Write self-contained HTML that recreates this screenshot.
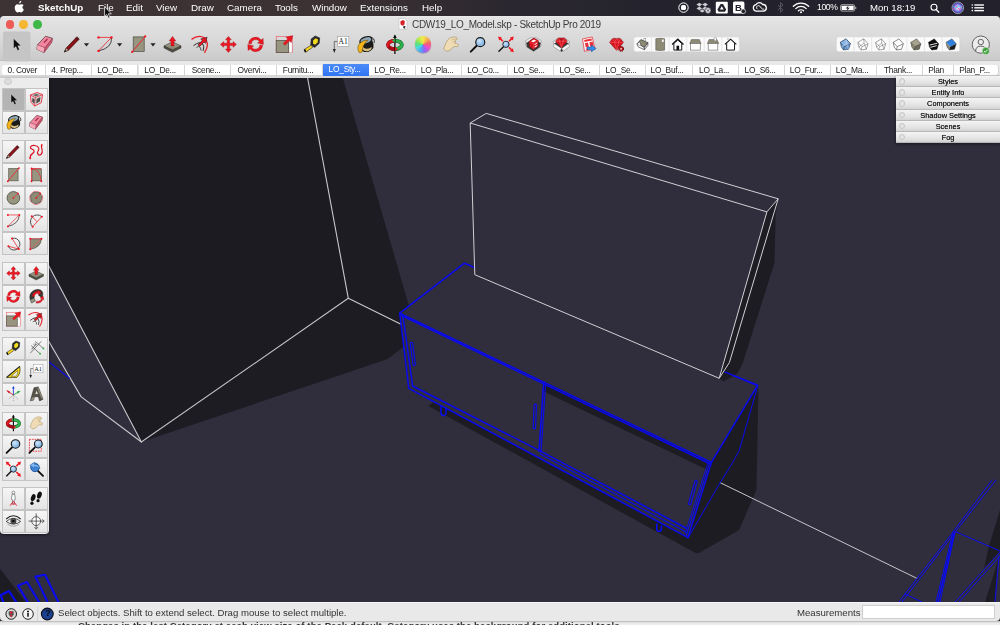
<!DOCTYPE html>
<html lang="en">
<head>
<meta charset="utf-8">
<title>CDW19_LO_Model.skp - SketchUp Pro 2019</title>
<style>
*{box-sizing:border-box;margin:0;padding:0}
html,body{width:1000px;height:625px;overflow:hidden;background:#302e3c;font-family:"Liberation Sans",sans-serif;}
body{position:relative}
.abs{position:absolute}
#menubar{position:absolute;left:0;top:0;width:1000px;height:16px;background:linear-gradient(90deg,#3e3334 0%,#3b3133 35%,#2c2830 50%,#24232d 65%,#23222c 100%);color:#fff;font-size:9.8px;line-height:15px;white-space:nowrap}
#menubar span{position:absolute;top:0}
#menubar .b{font-weight:bold}
#win{position:absolute;left:0;top:16px;width:1000px;height:45px;background:linear-gradient(#ececec 0,#e4e4e4 1.5px,#dadada 22px,#cbcbcb 43.500px,#bdbdbd 44.200px,#bdbdbd 100%);border-radius:4px 4px 0 0}
#title{position:absolute;left:412px;top:1.600px;font-size:10px;letter-spacing:-.31px;line-height:14px;color:#3c3c3c;white-space:nowrap}
.tl{position:absolute;top:4px;width:8.6px;height:8.6px;border-radius:50%}
#tabs{position:absolute;left:0;top:61px;width:1000px;height:16.500px;background:linear-gradient(#e9e9e9 0,#e6e6e6 14px,#d6d6d6 14.500px,#d9d9d9 100%)}
.tab{position:absolute;top:3.500px;height:10.700px;background:#fff;font-size:8.400px;letter-spacing:-.25px;line-height:11.300px;text-align:center;color:#1c1c1c;white-space:nowrap;border-right:1px solid #d4d4d4;padding-right:3px;overflow:hidden}
.tab.sel{background:linear-gradient(#4c8bf8,#2f74f2);color:#fff;top:3px;height:11.700px;border-right:0}
.tab:first-child{border-radius:3px 0 0 3px}.tab:last-child{border-radius:0 3px 3px 0}
#view{position:absolute;left:0;top:77.500px;width:1000px;height:524.500px;background:#302e3c;overflow:hidden}
#status{position:absolute;left:0;top:602px;width:1000px;height:18.600px;background:#e9e9e9;border-top:1px solid #f6f6f6;border-radius:0 0 4px 4px;font-size:9.6px;line-height:19px;color:#333;white-space:nowrap}
#under{position:absolute;left:0;top:620.600px;width:1000px;height:4.400px;background:linear-gradient(#a8a8a8 0,#cfcfcf .8px,#e9e9e9 1.800px,#f0f0f0 100%);overflow:hidden}

#tray{position:absolute;left:896px;top:76.300px;width:104px;height:67px;background:#d8d8d8;box-shadow:0 1px 3px rgba(0,0,0,.5)}
.trow{position:relative;height:11.1px;background:linear-gradient(#f4f4f4,#e2e2e2 70%,#d2d2d2);border-bottom:1px solid #b8b8b8;font-size:7.4px;line-height:11.600px;text-align:center;color:#1a1a1a;white-space:nowrap;text-shadow:0 0 .3px #333}
.trow i{position:absolute;left:2.5px;top:2px;width:6.5px;height:6.5px;border-radius:50%;background:#e4e4e4;border:.5px solid #c6c6c6}

#pal{position:absolute;left:0;top:77.500px;width:49.300px;height:456.700px;background:#ececec;border-radius:0 0 4px 4px;box-shadow:0 1px 3px rgba(0,0,0,.5)}
#pal .pc{position:absolute;left:4.300px;top:.300px;width:7.400px;height:7.400px;border-radius:50%;background:#dcdcdc;border:.5px solid #cbcbcb}
.cell{position:absolute;width:22.800px;height:23px;background:linear-gradient(#f6f6f6,#e4e4e4);border:.5px solid #c4c4c4}
.cell.sel{background:#b4b4b4}
#menubar span,#title,.tab u,.trow u,#status span,#under span{will-change:transform}
.tab u,.trow u{display:block;text-decoration:none}
</style>
</head>
<body>
















<!--ICONS--><svg width="0" height="0" style="position:absolute">
<defs>
<radialGradient id="lens" cx=".4" cy=".35" r=".7"><stop offset="0" stop-color="#cfe6fa"/><stop offset="1" stop-color="#6fa6dc"/></radialGradient>
<linearGradient id="slab" x1="0" y1="0" x2="0" y2="1"><stop offset="0" stop-color="#a9a793"/><stop offset="1" stop-color="#7d7b68"/></linearGradient>
<symbol id="i-select" viewBox="-10 -10 20 20" overflow="visible"><path d="M-2.700,-5.800V4.200L-0.400,2.200L1.300,6L3.100,5.200L1.400,1.400H4.600Z" fill="#0c0c0c" stroke="#fff" stroke-width=".5" stroke-opacity=".5"/></symbol>
<symbol id="i-eraser" viewBox="-10 -10 20 20" overflow="visible"><path d="M0.650,-8.200L7.500,-6.100L6.900,-2.200L-0.900,8.200L-8.100,4.800L-7.400,0.400Z" fill="#f2879f" stroke="#4a3036" stroke-width=".7" stroke-linejoin="round"/><path d="M-7.400,0.400L0,3.250L-0.900,8.200L-8.100,4.800Z" fill="#f7a9ba"/><path d="M7.500,-6.100L0,3.250L-0.900,8.200L6.900,-2.200Z" fill="#c9536c"/><path d="M-7.400,0.400L0,3.250L7.500,-6.100M0,3.250L-0.900,8.200" stroke="#6a2c3c" stroke-width=".5" fill="none"/><path d="M-1,-1.600L2.600,-5.400" stroke="#a8324f" stroke-width="1.500"/></symbol>
<symbol id="i-pencil" viewBox="-10 -10 20 20" overflow="visible"><path d="M-8.200,7.600L-6.300,3.600L4.400,-7.600L6.800,-5.400L-4,5.800Z" fill="#8c1016" stroke="#2a0a0c" stroke-width=".6" stroke-linejoin="round"/><path d="M-8.200,7.600L-6.300,3.600L-4,5.800Z" fill="#b8b0a0" stroke="#2a0a0c" stroke-width=".4"/><path d="M-8.200,7.600L-7.300,5.600L-6.100,6.700Z" fill="#111"/><path d="M3.200,-6.400L5.700,-4.200" stroke="#222" stroke-width=".9"/></symbol>
<symbol id="i-arc" viewBox="-10 -10 20 20" overflow="visible"><path d="M6.500,-7Q7.500,3.500 -6.500,6.500" stroke="#222" stroke-width=".8" fill="none"/><path d="M-6.500,-7H6.500L-6.500,6.500" stroke="#e8202a" stroke-width=".8" fill="none"/><circle cx="-6.500" cy="-7" r="1.200" fill="#f0141e"/><circle cx="6.500" cy="-7" r="1.200" fill="#f0141e"/><circle cx="-6.500" cy="6.500" r="1.200" fill="#f0141e"/></symbol>
<symbol id="i-rect" viewBox="-10 -10 20 20" overflow="visible"><rect x="-5.500" y="-7.500" width="11" height="14.500" fill="#97957f" stroke="#4c4b40" stroke-width=".7"/><path d="M-6.500,7.500L6.500,-8" stroke="#ee2030" stroke-width="1"/><circle cx="-6.500" cy="7.500" r="1.100" fill="#f0141e"/><circle cx="6.500" cy="-8" r="1.100" fill="#f0141e"/></symbol>
<symbol id="i-pushpull" viewBox="-10 -10 20 20" overflow="visible"><path d="M-8.500,1.500L0,-2.600L8.500,1.500L0,5.800Z" fill="url(#slab)" stroke="#3c3b32" stroke-width=".6"/><path d="M-8.500,1.500V3.500L0,7.900L8.500,3.500V1.500L0,5.800Z" fill="#4f4e43" stroke="#2c2b25" stroke-width=".5"/><path d="M-1.500,1.500V-3.500H-3.300L0,-8L3.300,-3.500H1.500V1.500Z" fill="#ee1620" stroke="#8a0a10" stroke-width=".4"/></symbol>
<symbol id="i-offset" viewBox="-10 -10 20 20" overflow="visible"><path d="M-9,-5Q-2,-10 4,-6.500Q10,-1.500 4,8.500" stroke="#e8202a" stroke-width="1.300" fill="none"/><path d="M-7,1.300Q-1,-3.500 2.200,-0.600Q4.200,2 2.600,6.500" stroke="#2a2a2a" stroke-width="1" fill="none"/><path d="M-4,3Q0,0.200 0.600,6.200" stroke="#2a2a2a" stroke-width=".8" fill="none"/><path d="M-2.600,0.400L1.800,-3.800L0.200,-5.400L6.600,-7.200L5,-1L3.500,-2.400L-0.800,2Z" fill="#ee1620" stroke="#111" stroke-width=".5" stroke-linejoin="round"/></symbol>
<symbol id="i-move" viewBox="-10 -10 20 20" overflow="visible"><path d="M0,-8L2.900,-4.700H1.200V-1.200H4.700V-2.900L8,0L4.700,2.900V1.200H1.200V4.700H2.900L0,8L-2.900,4.700H-1.200V1.200H-4.700V2.900L-8,0L-4.700,-2.900V-1.200H-1.200V-4.700H-2.900Z" fill="#ee1620" stroke="#a00c14" stroke-width=".4"/></symbol>
<symbol id="i-rotate" viewBox="-10 -10 20 20" overflow="visible"><path d="M-7,-1A7,7 0 0 1 5.500,-4.500L7.500,-6L7.800,0L2,-1.500L3.800,-3A4.500,4.500 0 0 0 -4.300,-0.500Z" fill="#ee1620" stroke="#a00c14" stroke-width=".4"/><path d="M7,1A7,7 0 0 1 -5.500,4.500L-7.500,6L-7.800,0L-2,1.500L-3.800,3A4.500,4.500 0 0 0 4.300,0.500Z" fill="#ee1620" stroke="#a00c14" stroke-width=".4"/></symbol>
<symbol id="i-scale" viewBox="-10 -10 20 20" overflow="visible"><rect x="-8" y="-8" width="16" height="16" fill="none" stroke="#ee5060" stroke-width=".6"/><rect x="5" y="-2" width="2.500" height="10" fill="#fff"/><rect x="-8" y="-4" width="12.500" height="12" fill="#97957f" stroke="#4c4b40" stroke-width=".7"/><path d="M-1,-1L3.500,-5.500L1.800,-7.200L8.500,-8.800L7,-2L5.300,-3.700L0.800,0.800Z" fill="#ee1620" stroke="#a00c14" stroke-width=".4"/></symbol>
<symbol id="i-tape" viewBox="-10 -10 20 20" overflow="visible"><path d="M-1,-5.500L3,-8.500L7.500,-6.500L7,-1L2.500,3L-1.500,0.500Z" fill="#2a2a2a" stroke="#111" stroke-width=".5"/><path d="M1,-4.200L3.500,-6.200L5.800,-5L5.400,-1.800L2.800,0.300L0.800,-1Z" fill="#f3dc1c"/><path d="M-7.800,5L-1.200,0.800L0.600,2.800L-6.500,7.800Z" fill="#f2d21a" stroke="#222" stroke-width=".6"/><path d="M-7.800,5L-6.500,7.800" stroke="#111" stroke-width="1.600"/></symbol>
<symbol id="i-text" viewBox="-10 -10 20 20" overflow="visible"><rect x="-3.500" y="-8" width="11.500" height="10" fill="#fff" stroke="#9a9a9a" stroke-width=".6"/><text x="2.300" y="-0.300" font-family="Liberation Serif,serif" font-size="7.500" text-anchor="middle" fill="#111">A1</text><path d="M-3.500,-3H-6.500V5" stroke="#444" stroke-width=".7" fill="none"/><path d="M-8,4.500H-5L-6.500,8.500Z" fill="#222"/></symbol>
<symbol id="i-paint" viewBox="-10 -10 20 20" overflow="visible"><path d="M-5.800,-2.500Q-6,5.500 -1.500,7.500Q4,8.500 7.800,3.500Q8.500,-1 6,-5.500Z" fill="#1a1a1a"/><path d="M-3,2Q0,6.500 6,2.500Q6.500,5 3,6.500Q-1,7.500 -3.500,4.500Z" fill="#d6bd80"/><ellipse cx="0.300" cy="-4" rx="6.200" ry="3.500" transform="rotate(-18 0.300 -4)" fill="#8fa6b4" stroke="#1a1a1a" stroke-width="1.300"/><path d="M-6.500,8Q-9.500,2.500 -5.500,-1.500Q-2,-4.500 2.500,-4.200Q-0.500,-2 -2,1Q-3.500,4.500 -3.500,7.600Q-5,8.600 -6.500,8Z" fill="#f2b418" stroke="#5a3e06" stroke-width=".5"/><path d="M5,-7Q9.500,-6.500 8.500,-1.500" stroke="#1a1a1a" stroke-width=".9" fill="none"/></symbol>
<symbol id="i-orbit" viewBox="-10 -10 20 20" overflow="visible"><path d="M0,-3.800A7,4.200 0 0 0 0,4.600" fill="none" stroke="#6a060c" stroke-width="3.800"/><path d="M0,-3.800A7,4.200 0 0 1 0,4.600" fill="none" stroke="#0f5a22" stroke-width="3.800"/><path d="M0,-3.800A7,4.200 0 0 0 0,4.600" fill="none" stroke="#e01822" stroke-width="2.800"/><path d="M0,-3.800A7,4.200 0 0 1 0,4.600" fill="none" stroke="#2eb24e" stroke-width="2.800"/><path d="M-6.500,2.200A7,4.200 0 0 0 0,4.600" fill="none" stroke="#a80c16" stroke-width="2.800"/><path d="M0,-9V9.500" stroke="#0c0c0c" stroke-width="1.300"/><path d="M-1.800,-6.500L0,-9.800L1.800,-6.500Z" fill="#0c0c0c"/><path d="M0,2.600L3.200,4.600L0,6.800Z" fill="#e01822"/><path d="M0,-5.800L-3,-3.800L0,-1.800Z" fill="#2eb24e"/></symbol>
<symbol id="i-pan" viewBox="-10 -10 20 20" overflow="visible"><path d="M-7.200,4.500L-4.800,-1.500Q-3.500,-5 -0.500,-6.600Q2.500,-8 5.500,-7.200Q7.200,-6.300 6,-5L4,-3.800Q5.200,-3.500 4.600,-2.200L3.600,-1.200Q6,-1.200 7.600,0.400Q7.800,2 6.200,2.400Q4,1.600 2.400,2.600Q0.500,4 -0.500,5.800L-4.200,6.800Z" fill="#f0dcb4" stroke="#a89060" stroke-width=".6" stroke-linejoin="round"/><path d="M0.500,-4.200Q2.500,-5.800 5.800,-5.200M1.500,-2.300Q3,-3.200 4.400,-2.800" fill="none" stroke="#b49a6c" stroke-width=".5"/></symbol>
<symbol id="i-zoom" viewBox="-10 -10 20 20" overflow="visible"><path d="M-8,8L-1.500,1.500" stroke="#111" stroke-width="2.200" stroke-linecap="round"/><circle cx="2.500" cy="-2.500" r="5" fill="url(#lens)" stroke="#1a1a1a" stroke-width="1.300"/></symbol>
<symbol id="i-zoomext" viewBox="-10 -10 20 20" overflow="visible"><path d="M-8,8L-2,2" stroke="#111" stroke-width="1.600" stroke-linecap="round"/><circle cx="0" cy="0" r="3.600" fill="url(#lens)" stroke="#1a1a1a" stroke-width="1"/><path d="M-9,-9L-4.500,-7.800L-7.800,-4.500ZM9,-9L4.500,-7.800L7.800,-4.500ZM9,9L4.500,7.800L7.800,4.500Z" fill="#ee1620"/><path d="M-6.500,-6.500L-3.500,-3.500M6.500,-6.500L3.500,-3.500M6.500,6.500L3.500,3.500" stroke="#ee1620" stroke-width="1.800"/></symbol>
<symbol id="i-zoomwin" viewBox="-10 -10 20 20" overflow="visible"><rect x="-8" y="-8" width="14" height="14" fill="none" stroke="#ee1620" stroke-width=".9" stroke-dasharray="2 1"/><path d="M-8,8L-1.500,1.500" stroke="#111" stroke-width="2.200" stroke-linecap="round"/><circle cx="2.500" cy="-2.500" r="4.600" fill="url(#lens)" stroke="#1a1a1a" stroke-width="1.200"/></symbol>
<symbol id="i-prev" viewBox="-10 -10 20 20" overflow="visible"><path d="M8,8L2,2" stroke="#111" stroke-width="2.200" stroke-linecap="round"/><circle cx="-1.500" cy="-2" r="5" fill="#3f86d8" stroke="#1d4f8e" stroke-width="1"/><path d="M-7.500,-4.500L-2,-8V-5.800Q3.500,-5.500 4.500,0Q2,-3 -2,-2.800V-1Z" fill="#7db8f2" stroke="#1d4f8e" stroke-width=".5"/></symbol>
<symbol id="i-wh" viewBox="-10 -10 20 20" overflow="visible"><path d="M-8,-1.500L0,-6.500L8,-1.500L7,3L0.300,7.500L-7,3Z" fill="#3a3a36" stroke="#1c1c1c" stroke-width=".5"/><path d="M-8,-1.500L-9,-3.800L-2.500,-7.800L0,-6.500ZM8,-1.500L9,-3.800L2.500,-7.800L0,-6.500Z" fill="#ececec" stroke="#555" stroke-width=".4"/><path d="M-7,3L-8.500,1.200L-8,-1.500ZM7,3L8.500,1.200L8,-1.500Z" fill="#ececec" stroke="#555" stroke-width=".4"/><path d="M-4.800,-3.200L0.500,-7.200L5.500,-4.200L5,2.300L0,5.500L-4.600,2.300Z" fill="#d8141e" stroke="#7a0a10" stroke-width=".5"/><path d="M-4.800,-3.200L0.200,-0.800L5.500,-4.200M0.200,-0.800L0,5.500" stroke="#f25a62" stroke-width=".5" fill="none"/><path d="M-2.800,-3.600L0.600,-5.400L3.200,-4L-0.200,-2.300ZM1.300,-0.200L4.300,-2V-0.900L1.300,0.900ZM1.300,2.400L4.300,0.600V1.800L1.300,3.600Z" fill="#fff"/></symbol>
<symbol id="i-extwh" viewBox="-10 -10 20 20" overflow="visible"><path d="M-8,-1L0,-5.500L8,-1L7,3.500L0.300,7.800L-7,3.500Z" fill="#3a3a36" stroke="#1c1c1c" stroke-width=".5"/><path d="M-8,-1L-9.500,-3L-3,-7L0,-5.500ZM8,-1L9.500,-3L3,-7L0,-5.500Z" fill="#ececec" stroke="#555" stroke-width=".4"/><path d="M-8,-1L-9,2.500L-1.500,7.500L0.300,4.500ZM8,-1L9,2.500L2,7.500L0.300,4.500Z" fill="#f4f4f4" stroke="#555" stroke-width=".4"/><path d="M-6.500,-3.500L-3.500,-7.200H3.500L6.500,-3.500L0,3.800Z" fill="#d8141e" stroke="#7a0a10" stroke-width=".5"/><path d="M-6.500,-3.500H6.500M-3.500,-7.200L-2,-3.500L0,-7.200L2,-3.500L3.500,-7.200M-2,-3.500L0,3.800L2,-3.500" stroke="#ff7a84" stroke-width=".45" fill="none"/><path d="M-2,-6.500L0,-3.800L2,-6.500Z" fill="#a00c14"/></symbol>
<symbol id="i-layout" viewBox="-10 -10 20 20" overflow="visible"><path d="M-8,-7L4.500,-9.500L8,6L-5.500,9Z" fill="#fff" stroke="#e8323c" stroke-width="1"/><path d="M-6,-5.500L3.500,-7.500L4.200,-5L-5.400,-3ZM-5,-1.500L-1,-2.300L0.200,3.200L-3.800,4ZM0.800,-2.800L5,-3.700L6.300,2L2,3ZM-3.500,5.500L-0.500,4.800L0,7L-3,7.600Z" fill="#e8323c"/><path d="M-2,3.500H3.500V1L9.500,5.200L3.500,9.500V7H-2Z" fill="#2c8cf0" stroke="#12447e" stroke-width=".6"/></symbol>
<symbol id="i-ruby" viewBox="-10 -10 20 20" overflow="visible"><path d="M-9,-2.500L-5,-7.500H4.500L8.500,-2.500L0,7.500Z" fill="#d8141e" stroke="#7a0a10" stroke-width=".6"/><path d="M-9,-2.500H8.500M-5,-7.500L-2.500,-2.500L0,-7.500L2.500,-2.500L4.500,-7.500M-2.500,-2.500L0,7.500L2.500,-2.500" stroke="#ff7a84" stroke-width=".5" fill="none"/><circle cx="5.500" cy="5.500" r="3" fill="#c0101a" stroke="#6a060c" stroke-width="1.400" stroke-dasharray="1.300 .9"/><circle cx="5.500" cy="5.500" r="1.100" fill="#e8e8e8"/></symbol>
<symbol id="i-wheel" viewBox="-10 -10 20 20" overflow="visible"><circle r="8.200" fill="#aaa"/></symbol>
<symbol id="v-iso" viewBox="-8 -8 16 16" overflow="visible"><path d="M-6.500,-0.500L-2,-5.500L6,-2L2,3.500Z" fill="#8d8b76" stroke="#222" stroke-width=".7" stroke-linejoin="round"/><path d="M-6.500,-0.500L-1.500,1.500L2,3.500V6L-5,2.800Z" fill="#fff" stroke="#222" stroke-width=".7" stroke-linejoin="round"/><path d="M2,3.500L6,-2V1.200L2,6Z" fill="#e8e8e8" stroke="#222" stroke-width=".7" stroke-linejoin="round"/><path d="M-6.500,-0.500L-3.500,-3L-1.500,1.500" fill="#fff" stroke="#222" stroke-width=".6"/><rect x="1.500" y="-6.500" width="2.200" height="2.500" fill="#fff" stroke="#555" stroke-width=".4"/></symbol>
<symbol id="v-top" viewBox="-8 -8 16 16" overflow="visible"><path d="M-5,-6.500Q0,-7.500 5,-6.500V6.500Q0,7.500 -5,6.500Z" fill="#8d8b76" stroke="#55544a" stroke-width=".7"/><rect x="2" y="-5.500" width="2" height="2.600" fill="#fff"/></symbol>
<symbol id="v-front" viewBox="-8 -8 16 16" overflow="visible"><path d="M-6.500,0L0,-6L6.500,0" fill="none" stroke="#111" stroke-width="1.500" stroke-linejoin="miter"/><path d="M-4.500,-1V6.500H4.500V-1L0,-5Z" fill="#fff" stroke="#111" stroke-width="1.100"/><rect x="-1.500" y="1.500" width="3" height="5" fill="#111"/></symbol>
<symbol id="v-right" viewBox="-8 -8 16 16" overflow="visible"><path d="M-6.500,-1L-4.500,-5.500H4.500L6.500,-1Z" fill="#8d8b76" stroke="#55544a" stroke-width=".6"/><rect x="-5.500" y="-1" width="11" height="7.500" fill="#fff" stroke="#666" stroke-width=".7"/></symbol>
<symbol id="v-back" viewBox="-8 -8 16 16" overflow="visible"><path d="M-6.500,-1L-4.500,-5.500H4.500L6.500,-1Z" fill="#8d8b76" stroke="#55544a" stroke-width=".6"/><rect x="-5.500" y="-1" width="11" height="7.500" fill="#fff" stroke="#666" stroke-width=".7"/><rect x="1.200" y="-7.500" width="2.600" height="3.500" fill="#fff" stroke="#666" stroke-width=".5"/></symbol>
<symbol id="v-left" viewBox="-8 -8 16 16" overflow="visible"><path d="M-6.500,0L0,-6L6.500,0" fill="none" stroke="#111" stroke-width="1.300"/><path d="M-4.500,-1.500V6.500H4.500V-1.500" fill="#fff" stroke="#111" stroke-width="1.100"/><path d="M-3,-5.500V-7" stroke="#555" stroke-width=".8"/></symbol>
<symbol id="s-cube" viewBox="-8 -8 16 16" overflow="visible"><path d="M-6,-2.500L1.100,-6.800L6.400,-0.800L4.300,6L-2.100,6.800L-4.800,3.200Z" fill="var(--f,#fff)" stroke="var(--s,#333)" stroke-width=".7" stroke-linejoin="round"/><path d="M-6,-2.500L-1,2.800L6.400,-0.800M-1,2.800L-2.100,6.800" fill="none" stroke="var(--s,#333)" stroke-width=".7"/></symbol>
<symbol id="s-xray" viewBox="-8 -8 16 16" overflow="visible"><path d="M-6,-2.500L1.100,-6.800L6.400,-0.800L4.300,6L-2.100,6.800L-4.800,3.200Z" fill="#6f9bd0" stroke="#1f3552" stroke-width=".7" stroke-linejoin="round"/><path d="M-6,-2.500L-1,2.800L6.400,-0.800L1.100,-6.800Z" fill="#8db5e4" stroke="#1f3552" stroke-width=".6"/><path d="M-1,2.800L-2.100,6.800" stroke="#1f3552" stroke-width=".7"/><path d="M-4.800,3.200L1.600,-1.600L4.300,6M1.600,-1.600L1.100,-6.800" fill="none" stroke="#dbe8f8" stroke-width=".5"/></symbol>
<symbol id="s-wire" viewBox="-8 -8 16 16" overflow="visible"><path d="M-6,-2.500L1.100,-6.800L6.400,-0.800L4.300,6L-2.100,6.800L-4.800,3.200Z" fill="#fff" stroke="#444" stroke-width=".6" stroke-linejoin="round"/><path d="M-6,-2.500L-1,2.800L6.400,-0.800M-1,2.800L-2.100,6.800M-4.800,3.200L1.600,-1.600L4.300,6M1.600,-1.600L1.100,-6.800" fill="none" stroke="#444" stroke-width=".5"/></symbol>
<symbol id="s-hidden" viewBox="-8 -8 16 16" overflow="visible"><path d="M-6,-2.500L1.100,-6.800L6.400,-0.800L4.300,6L-2.100,6.800L-4.800,3.200Z" fill="#fff" stroke="#333" stroke-width=".7" stroke-linejoin="round"/><path d="M-6,-2.500L-1,2.800L6.400,-0.800M-1,2.800L-2.100,6.800" fill="none" stroke="#333" stroke-width=".7"/></symbol>
<symbol id="s-shaded" viewBox="-8 -8 16 16" overflow="visible"><path d="M-6,-2.500L1.100,-6.800L6.400,-0.800L-1,2.800Z" fill="#a5a38e"/><path d="M-6,-2.500L-1,2.800L-2.100,6.800L-4.800,3.200Z" fill="#8d8b76"/><path d="M-1,2.800L6.400,-0.800L4.300,6L-2.100,6.800Z" fill="#6c6a58"/><path d="M-6,-2.500L1.100,-6.800L6.400,-0.800L4.300,6L-2.100,6.800L-4.800,3.200ZM-6,-2.500L-1,2.800L6.400,-0.800M-1,2.800L-2.100,6.800" fill="none" stroke="#2c2b25" stroke-width=".6" stroke-linejoin="round"/></symbol>
<symbol id="s-tex" viewBox="-8 -8 16 16" overflow="visible"><path d="M-6,-2.500L1.100,-6.800L6.400,-0.800L4.300,6L-2.100,6.800L-4.800,3.200Z" fill="#0c0c0c" stroke="#000" stroke-width=".6" stroke-linejoin="round"/><path d="M-4.600,0.800L4.800,-1.400M-3.800,3.600L4,1.600" fill="none" stroke="#e6e6e6" stroke-width="1.200"/></symbol>
<symbol id="s-mono" viewBox="-8 -8 16 16" overflow="visible"><path d="M-6,-2.500L1.100,-6.800L6.400,-0.800L-1,2.800Z" fill="#2f80e0"/><path d="M-6,-2.500L-1,2.800L-2.100,6.800L-4.800,3.200Z" fill="#8d8b76"/><path d="M-1,2.800L6.400,-0.800L4.300,6L-2.100,6.800Z" fill="#1c1c1c"/><path d="M-6,-2.500L1.100,-6.800L6.400,-0.800L4.300,6L-2.100,6.800L-4.800,3.200Z" fill="none" stroke="#1c2c44" stroke-width=".6" stroke-linejoin="round"/></symbol>
<!-- palette-only icons -->
<symbol id="p-comp" viewBox="-10 -10 20 20" overflow="visible"><path d="M-7,-5L1,-8L7.500,-5.500L6,4L-2,8L-6,3.500Z" fill="#d8d8d8" stroke="#e8364a" stroke-width="1.100" stroke-linejoin="round"/><path d="M-7,-5L-1,-2L7.500,-5.500M-1,-2L-2,8" fill="none" stroke="#e8364a" stroke-width="1"/><path d="M-4.500,-1.500L-1.800,0L-2.300,5.500L-4.800,2.500ZM0.500,-0.500L5,-2.800L4.300,2.500L0,5Z" fill="#4a4a46"/><path d="M-4,-5L0.500,-6.500L4,-5L-0.800,-3.200Z" fill="#6a6a64"/></symbol>
<symbol id="p-free" viewBox="-10 -10 20 20" overflow="visible"><path d="M-7,7.500C-8,1 -2,3 -2.500,-1C-3,-4.500 -8,-2.500 -6.500,-6C-5,-9 2,-7.500 3,-4.500C4,-1.500 0,0 2,2.500C4,5 8,3 7,-2C6.500,-5 5.500,-6.500 6.500,-8" fill="none" stroke="#d81424" stroke-width="1.400" stroke-linecap="round"/><circle cx="-7" cy="7.500" r="1.100" fill="#f0141e"/><circle cx="6.500" cy="-8" r="1.100" fill="#f0141e"/></symbol>
<symbol id="p-rrect" viewBox="-10 -10 20 20" overflow="visible"><rect x="-5" y="-7" width="11" height="14" fill="#97957f" stroke="#4c4b40" stroke-width=".7"/><path d="M-5.500,7.500V-7.500H6M-5.500,-7.500Q5,-6 6,7.500" stroke="#ee2030" stroke-width=".8" fill="none"/><circle cx="-5.500" cy="7.500" r="1.100" fill="#f0141e"/><circle cx="-5.500" cy="-7.500" r="1.100" fill="#f0141e"/><circle cx="6" cy="7.500" r="1.100" fill="#f0141e"/></symbol>
<symbol id="p-circle" viewBox="-10 -10 20 20" overflow="visible"><circle r="7.500" fill="#97957f" stroke="#3c3b32" stroke-width=".8"/><path d="M0,0L5.300,-5.300" stroke="#ee2030" stroke-width=".8"/><circle r="1" fill="#f0141e"/><circle cx="5.300" cy="-5.300" r="1" fill="#f0141e"/></symbol>
<symbol id="p-poly" viewBox="-10 -10 20 20" overflow="visible"><circle r="7.700" fill="none" stroke="#ee5868" stroke-width=".8"/><path d="M-2.800,-6.800L3.600,-6.400L7,-1L5,5L-0.800,7.200L-6,4L-6.800,-2.400Z" fill="#8d8b76" stroke="#3c3b32" stroke-width=".7"/><path d="M0,0L4.700,-5.400" stroke="#ee2030" stroke-width=".8"/><circle r="1" fill="#f0141e"/><circle cx="4.700" cy="-5.400" r="1" fill="#f0141e"/></symbol>
<symbol id="p-arc2" viewBox="-10 -10 20 20" overflow="visible"><path d="M-6.500,6.500Q6.500,3.500 7,-7" stroke="#222" stroke-width=".8" fill="none"/><path d="M-6.500,-7H7L-6.500,6.500" stroke="#e8202a" stroke-width=".8" fill="none"/><circle cx="-6.500" cy="-7" r="1.100" fill="#f0141e"/><circle cx="7" cy="-7" r="1.100" fill="#f0141e"/><circle cx="-6.500" cy="6.500" r="1.100" fill="#f0141e"/></symbol>
<symbol id="p-arc1" viewBox="-10 -10 20 20" overflow="visible"><path d="M6.600,-4.900A7.800,7.800 0 1 0 -4.200,6.800" stroke="#222" stroke-width=".9" fill="none"/><path d="M-4.200,6.800L6.600,-4.900M-5.200,-5.400L0.900,0.900" stroke="#e8202a" stroke-width=".9" fill="none"/><circle cx="-5.200" cy="-5.400" r="1.200" fill="#f0141e"/><circle cx="6.600" cy="-4.900" r="1.200" fill="#f0141e"/><circle cx="-4.200" cy="6.800" r="1.200" fill="#f0141e"/></symbol>
<symbol id="p-arc3" viewBox="-10 -10 20 20" overflow="visible"><path d="M-1.600,-6.400A7,7 0 1 1 -5.900,2.800" stroke="#222" stroke-width=".9" fill="none"/><path d="M-1.600,-6.400L6.400,6.100L-5.900,2.800" stroke="#e8202a" stroke-width=".9" fill="none"/><circle cx="-1.600" cy="-6.400" r="1.200" fill="#f0141e"/><circle cx="-5.900" cy="2.800" r="1.200" fill="#f0141e"/><circle cx="6.400" cy="6.100" r="1.200" fill="#f0141e"/></symbol>
<symbol id="p-pie" viewBox="-10 -10 20 20" overflow="visible"><path d="M-7,-6H6.200Q5.500,4.500 -7,6.400Z" fill="#8d8b76" stroke="#3c3b32" stroke-width=".7"/><path d="M-7,6.400V-6H6.200L-7,6.400" stroke="#f05060" stroke-width=".8" fill="none"/><circle cx="-7" cy="-6" r="1.200" fill="#f0141e"/><circle cx="6.200" cy="-6" r="1.200" fill="#f0141e"/><circle cx="-7" cy="6.400" r="1.200" fill="#f0141e"/></symbol>
<symbol id="p-follow" viewBox="-10 -10 20 20" overflow="visible"><path d="M-7,4C-9,-3 -4,-8 2,-8C8,-8 9,-2 6.500,1L3,-1C4.500,-3 3.500,-4.500 1,-4.500C-2,-4.500 -3.500,-1.500 -2.500,2Z" fill="#3c3a34" stroke="#111" stroke-width=".6"/><path d="M-7,4L-2.500,2L-1,5.500L-5.500,8Z" fill="#97957f" stroke="#111" stroke-width=".5"/><path d="M-4.500,0C-4.500,-3.500 -1,-6 2,-5.500L1.500,-7.500L6,-4.500L2.500,-1.500L2.300,-3.500C0,-3.800 -2,-2 -2,0.500Z" fill="#ee1620" stroke="#7a0a10" stroke-width=".4"/><path d="M0,6Q5,6.500 6.500,2.500L4.500,2L8,-0.500L9,4L7.800,3.500Q6,8.500 0,8Z" fill="#ee1620" stroke="#7a0a10" stroke-width=".4"/></symbol>
<symbol id="p-dim" viewBox="-10 -10 20 20" overflow="visible"><path d="M-6,-3L5,7M-1,-8L9,1" stroke="#333" stroke-width=".7"/><path d="M-7,6L6,-8" stroke="#333" stroke-width=".7"/><path d="M-5.500,1.500L0,-4.500" stroke="#111" stroke-width=".7"/><text x="-3.500" y="-4.500" font-family="Liberation Sans,sans-serif" font-size="4.500" fill="#222" transform="rotate(40 -3.500 -4.500)">3'</text><circle cx="4.500" cy="6.500" r="1.100" fill="#2eb24e"/><circle cx="8.500" cy="0.500" r="1.100" fill="#2eb24e"/></symbol>
<symbol id="p-protr" viewBox="-10 -10 20 20" overflow="visible"><path d="M-8,7.500L7.500,-5.500Q9,3 4,7.500Z" fill="#f0d21c" stroke="#3c3408" stroke-width=".8" stroke-linejoin="round"/><path d="M-2.500,6L5,-0.500Q5.500,3.500 3.200,6Z" fill="#eee" stroke="#3c3408" stroke-width=".5"/><path d="M-8,7.500L7.500,-5.500" stroke="#222" stroke-width="1.200"/></symbol>
<symbol id="p-axes" viewBox="-10 -10 20 20" overflow="visible"><path d="M0,1V-8" stroke="#1838d8" stroke-width="1"/><path d="M0,1L7,-3" stroke="#18a038" stroke-width="1"/><path d="M0,1L-7,-3.500" stroke="#d81424" stroke-width="1"/><path d="M0,1L-6,6M0,1L6,6.500M0,1V8" stroke="#555" stroke-width=".6" stroke-dasharray="1 1"/><path d="M-1.500,-6.500L0,-9.500L1.500,-6.500Z" fill="#1838d8"/><path d="M5,-0.500L8.500,-4L4.200,-3Z" fill="#18a038"/><path d="M-5,-0.800L-8.500,-4.500L-4.200,-3.500Z" fill="#d81424"/></symbol>
<symbol id="p-3dtext" viewBox="-10 -10 20 20" overflow="visible"><path d="M-7,8L-2.500,-7.500L2.500,-8.500L8,6L4,8L2.500,3H-2L-3,7Z" fill="#55534a" stroke="#222" stroke-width=".6" stroke-linejoin="round"/><path d="M-7,8L-3,7L-2,3L-4.500,4Z M2.500,-8.500L8,6L6,5L1.500,-6.500Z" fill="#8d8b76"/><path d="M-1,0L0.500,-4L2,0Z" fill="#ecebe6"/></symbol>
<symbol id="p-poscam" viewBox="-10 -10 20 20" overflow="visible"><circle cx="0" cy="-6.500" r="1.700" fill="#fff" stroke="#333" stroke-width=".6"/><path d="M-1.500,-4.500H1.500L2.300,1.500L1,2L0.800,7H-0.800L-1,2L-2.300,1.500Z" fill="#fff" stroke="#333" stroke-width=".6"/><path d="M-4,9L0,3.500L4,9M-2.500,7H2.500" stroke="#d81424" stroke-width=".9" fill="none"/></symbol>
<symbol id="p-walk" viewBox="-10 -10 20 20" overflow="visible"><ellipse cx="-3.500" cy="-0.500" rx="2.600" ry="4.300" transform="rotate(18 -3.500 -0.500)" fill="#111"/><ellipse cx="-5" cy="6" rx="1.900" ry="2" fill="#111"/><ellipse cx="3.800" cy="-3.500" rx="2.600" ry="4.300" transform="rotate(18 3.800 -3.500)" fill="#111"/><ellipse cx="2.200" cy="3" rx="1.900" ry="2" fill="#111"/></symbol>
<symbol id="p-look" viewBox="-10 -10 20 20" overflow="visible"><path d="M-8.500,0.500Q0,-7 8.500,0.500Q0,6.500 -8.500,0.500Z" fill="#f2f2f2" stroke="#222" stroke-width=".9"/><circle cx="0" cy="0" r="3.200" fill="#555" stroke="#111" stroke-width=".6"/><circle cx="0" cy="0" r="1.400" fill="#000"/><path d="M-8.500,-2.500Q0,-10 8.500,-2.500" stroke="#222" stroke-width="1.300" fill="none"/><path d="M-7,3.500Q0,8.500 7,3.500" stroke="#666" stroke-width=".6" fill="none"/></symbol>
<symbol id="p-section" viewBox="-10 -10 20 20" overflow="visible"><circle r="5.200" fill="#fff" stroke="#222" stroke-width=".8"/><path d="M-9,0H9M0,-9V9" stroke="#222" stroke-width=".8"/><path d="M7,-2L9.500,0L7,2M-2,7L0,9.500L2,7" fill="none" stroke="#222" stroke-width=".7"/></symbol>
</defs>
</svg>
<!--/ICONS-->
<div id="menubar">
<span class="b" style="left:38px">SketchUp</span>
<span style="left:98px">File</span>
<span style="left:126px">Edit</span>
<span style="left:156px">View</span>
<span style="left:191px">Draw</span>
<span style="left:227px">Camera</span>
<span style="left:275.200px">Tools</span>
<span style="left:312px">Window</span>
<span style="left:360px">Extensions</span>
<span style="left:422px">Help</span>
<span style="left:816.500px;font-size:8.600px;letter-spacing:-.35px">100%</span>
<span style="left:869.500px;font-size:9.600px">Mon 18:19</span>
<svg id="mbi" class="abs" style="left:0;top:0" width="1000" height="20" viewBox="0 0 1000 20">
<path transform="translate(-2.600,-1.700) scale(1.140)" d="M21.300,5.300c-.8,-.1 -1.500,.4 -1.900,.4c-.4,0 -1,-.4 -1.700,-.4c-1.300,0 -2.500,1.100 -2.500,3c0,1.900 1.300,4.100 2.400,4.100c.6,0 .9,-.4 1.700,-.4c.8,0 1,.4 1.700,.4c1,0 1.900,-1.500 2.200,-2.500c-1.600,-.7 -1.700,-3 -.2,-3.700c-.4,-.6 -1,-.9 -1.700,-.9zM20.900,2.200c-1,.1 -1.900,1.100 -1.700,2.300c1,0 1.900,-1.100 1.700,-2.300z" fill="#fff"/>
<g fill="none" stroke="#fff">
<circle cx="683.500" cy="7.600" r="4.700" stroke-width="1"/><rect x="681" y="5.100" width="5" height="5" rx="1.600" fill="#fff" stroke="none"/>
</g>
<g fill="#c9c9d2"><path d="M699.300,2.800l2.900,1.800l-2.900,1.800l-2.900,-1.800zM705.100,2.800l2.900,1.800l-2.900,1.800l-2.900,-1.800zM699.300,6.600l2.900,1.800l-2.900,1.800l-2.900,-1.800zM705.100,6.600l2.900,1.800l-2.900,1.800l-2.900,-1.800zM702.200,9.200l2.700,1.700l-2.700,1.700l-2.700,-1.700z"/></g>
<circle cx="708" cy="10.500" r="2.900" fill="#e4e4ea" stroke="#24232d" stroke-width=".6"/><path d="M706.900,9.400l2.200,2.200m0,-2.200l-2.200,2.200" stroke="#24232d" stroke-width=".8"/>
<rect x="715.800" y="1.800" width="12" height="11.600" rx="1" fill="#fff"/><path d="M720.600,4l2.400,0l3.200,5.600l-1.200,2.100h-6.400l-1.200,-2.100zM721.800,6.200l-1.900,3.300h3.800z" fill="#24232d" fill-rule="evenodd"/>
<rect x="733" y="1.500" width="11.400" height="12" rx="1.500" fill="#fff"/>
<circle cx="743.300" cy="11.300" r="2.300" fill="#24232d" stroke="#fff" stroke-width=".6"/>
<g fill="none" stroke="#fff" stroke-width="1.300"><path d="M756.500,11.200a3.300,3.300 0 0 1 -.6,-6.500a3.900,3.900 0 0 1 6.800,-.2a3.400,3.400 0 0 1 1,6.700z"/><path d="M757.600,9.200a2,2 0 0 1 0,-3.400c1,-.5 2,0 2.700,.9l1.400,1.800c.7,.9 1.700,1 2.400,.3" stroke-width="1"/></g>
<path d="M778,5l5,5l-2.500,2.400v-9.800l2.500,2.400l-5,5" fill="none" stroke="#5b5a66" stroke-width=".9"/>
<g fill="none" stroke="#fff" stroke-width="1.300" stroke-linecap="round"><path d="M793.300,6.300a10.800,10.800 0 0 1 15.400,0"/><path d="M795.800,8.600a7.400,7.400 0 0 1 10.400,0"/><path d="M798.400,10.800a3.700,3.700 0 0 1 5.200,0" stroke-width="1.200"/></g><circle cx="801" cy="12.300" r="1" fill="#fff"/>
<rect x="840.600" y="4.700" width="14" height="6.400" rx="1.400" fill="none" stroke="#fff" stroke-width=".8" stroke-opacity=".75"/><rect x="841.600" y="5.700" width="12" height="4.400" rx=".6" fill="#fff"/><path d="M855.300,6.700v2.400q1.200,-.3 1.200,-1.200t-1.200,-1.200z" fill="#fff" fill-opacity=".75"/><path d="M848.600,5.400l-3,3h2l-1,2.500l3.200,-3.100h-2z" fill="#24232d"/>
<circle cx="934" cy="7.200" r="3" fill="none" stroke="#fff" stroke-width="1.100"/><path d="M936.200,9.500l2.600,2.700" stroke="#fff" stroke-width="1.300" stroke-linecap="round"/>
<defs><radialGradient id="siri" cx=".5" cy=".5" r=".5"><stop offset="0" stop-color="#fff"/><stop offset=".35" stop-color="#c8b4f4"/><stop offset=".7" stop-color="#6a64dc"/><stop offset="1" stop-color="#2a285a"/></radialGradient></defs>
<circle cx="957.800" cy="7.800" r="5.800" fill="url(#siri)" stroke="#e8e8f0" stroke-width=".6"/><path d="M953.500,9.500q2.500,-5 4.500,-1.500t4,-2" stroke="#f060a0" stroke-width="1" fill="none"/><path d="M953.500,6.500q2.500,3 4.500,.5t4,1.500" stroke="#50d0f0" stroke-width="1" fill="none"/>
<g fill="#fff"><circle cx="972.300" cy="5" r=".8"/><circle cx="972.300" cy="7.800" r=".8"/><circle cx="972.300" cy="10.600" r=".8"/><rect x="974.400" y="4.300" width="9.500" height="1.400"/><rect x="974.400" y="7.100" width="9.500" height="1.400"/><rect x="974.400" y="9.900" width="9.500" height="1.400"/></g>
</svg>
<span class="abs" style="left:735.300px;top:1.500px;font-size:9.500px;font-weight:bold;color:#24232d;line-height:12px">B</span>
</div>
<div id="win">
<div class="tl" style="left:5.500px;background:#ee5c57"></div>
<div class="tl" style="left:19.300px;background:#f5b730"></div>
<div class="tl" style="left:33px;background:#3db849"></div>
<svg class="abs" style="left:398px;top:2px" width="10" height="12" viewBox="0 0 10 12"><path d="M1,.5h5.500l2.500,2.500v8.500h-8z" fill="#fff" stroke="#b0b0b0" stroke-width=".5"/><path d="M2.300,3.500l2.500,-1.500l2,1l-.3,3.500l-2.400,1.300l-1.600,-1.600z" fill="#d8222c"/><path d="M5.500,7.500l2.500,1.500l-1.300,.4l.7,1.300l-.6,.3l-.7,-1.300l-.8,.8z" fill="#111"/></svg><div id="title">CDW19_LO_Model.skp - SketchUp Pro 2019</div>
</div>
<div id="tabs">
<div class="tab" style="left:1.5px;width:44.67px"><u>0. Cover</u></div>
<div class="tab" style="left:46.17px;width:46.17px"><u>4. Prep...</u></div>
<div class="tab" style="left:92.34px;width:46.17px"><u>LO_De...</u></div>
<div class="tab" style="left:138.51px;width:46.17px"><u>LO_De...</u></div>
<div class="tab" style="left:184.68px;width:46.17px"><u>Scene...</u></div>
<div class="tab" style="left:230.85px;width:46.17px"><u>Overvi...</u></div>
<div class="tab" style="left:277.02px;width:46.17px"><u>Furnitu...</u></div>
<div class="tab sel" style="left:323.19px;width:46.17px"><u>LO_Sty...</u></div>
<div class="tab" style="left:369.36px;width:46.17px"><u>LO_Re...</u></div>
<div class="tab" style="left:415.53px;width:46.17px"><u>LO_Pla...</u></div>
<div class="tab" style="left:461.7px;width:46.17px"><u>LO_Co...</u></div>
<div class="tab" style="left:507.87px;width:46.17px"><u>LO_Se...</u></div>
<div class="tab" style="left:554.04px;width:46.17px"><u>LO_Se...</u></div>
<div class="tab" style="left:600.21px;width:46.17px"><u>LO_Se...</u></div>
<div class="tab" style="left:646.38px;width:46.17px"><u>LO_Buf...</u></div>
<div class="tab" style="left:692.55px;width:46.17px"><u>LO_La...</u></div>
<div class="tab" style="left:738.72px;width:46.17px"><u>LO_S6...</u></div>
<div class="tab" style="left:784.89px;width:46.17px"><u>LO_Fur...</u></div>
<div class="tab" style="left:831.06px;width:46.17px"><u>LO_Ma...</u></div>
<div class="tab" style="left:877.23px;width:46.17px"><u>Thank...</u></div>
<div class="tab" style="left:923.4px;width:30.3px"><u>Plan</u></div>
<div class="tab" style="left:953.7px;width:45.1px"><u>Plan_P...</u></div>
</div>
<div id="view">
<svg id="scene" class="abs" style="left:0;top:.5px" width="1000" height="524" viewBox="0 78 1000 524">
<!-- wall shadow -->
<polygon points="308,78 342.8,78 409,306 405,346 387.2,359.2 141.4,442 348,298" fill="#1d1c23"/>
<!-- wall face -->
<polygon points="0,78 308,78 348.3,298.3 141.4,442 0,173" fill="#1c1b22"/>
<!-- bottom-left dark wedge -->
<polygon points="0,568.8 25.8,602 0,602" fill="#1d1c23"/>
<!-- white lines -->
<g stroke="#c8c8cc" stroke-width="1.100" fill="none" stroke-linecap="round">
<polyline points="307.6,78 348.3,298.3 141.4,442 0,173"/>
<polyline points="141.4,442 81,396.6 0,257.8"/>
<line x1="348.3" y1="298.3" x2="402" y2="324.800"/>
</g>
<line x1="0" y1="323" x2="69.8" y2="378.6" stroke="#0a0af0" stroke-width="1.2"/>
<!-- cabinet floor shadow -->
<polygon points="757.9,385.2 758.4,392 756.5,489.5 739.2,529.9 698.8,552.9 696,553.3 428.4,406 436,400" fill="#1d1c23"/>
<!-- cabinet faces -->
<polygon points="399.7,313.2 464.5,263.2 757.4,385.6 711.4,462.4" fill="#302e3c"/>
<polygon points="399.7,313.2 711.4,462.4 688,537.6 408.8,388.3" fill="#302e3c"/>
<polygon points="757.9,385.2 712,462.8 688,538 720.4,482.3 732,463.6 739.2,450.6" fill="#1d1c23"/>
<!-- recess shadow -->
<polygon points="544.4,382.8 711.4,462.4 708.8,470.500 544,391.500" fill="#1d1c23"/>
<!-- floor line visible right of cabinet -->
<line x1="720" y1="482.6" x2="917" y2="578.4" stroke="#c6c6cc" stroke-width="1"/>
<!-- cabinet lines -->
<g stroke="#0a0af0" stroke-width="1.500" fill="none" stroke-linejoin="round" stroke-linecap="round">
<polygon points="399.7,313.2 464.5,263.2 757.4,385.6 711.4,462.4"/>
<polyline points="399.7,313.2 408.8,388.3 688,537.6 711.4,462.4"/>
<polyline points="403,316.5 412.6,386 540,450.8 686.9,528.5"/>
<line x1="401.5" y1="315.6" x2="711" y2="464.2"/>
<line x1="540" y1="454" x2="686.9" y2="532.5" stroke-width="1.100"/>
<polyline points="757.9,385.2 739.2,450.6 732,463.6 720.4,482.3 688,538" stroke-width="1"/>
<line x1="709.5" y1="463" x2="686" y2="536" stroke-width="1"/><line x1="708" y1="462.500" x2="685.200" y2="533" stroke-width=".8"/>
<line x1="543.600" y1="382.600" x2="539" y2="451.200"/>
<line x1="545.600" y1="383.600" x2="541" y2="452.200" stroke-width="1.100"/>
<path d="M441 406v7a2.5 2.5 0 0 0 5 0v-5"/>
<path d="M656.800 524v5a2.300 2.300 0 0 0 4.600 0v-3" stroke-width="1.600"/>
</g>
<g stroke="#0a0af0" stroke-width="0.9" fill="none" stroke-linecap="round">
<path d="M411.500,343.500 L414.200,364.500" stroke-width="3.500"/>
<path d="M535.300,405.300 L534.300,427.800" stroke-width="3.500"/>
<path d="M696,481.500 L689.800,503.500" stroke-width="3.500"/>
</g>
<g stroke="#302e3c" stroke-width="1.300" fill="none" stroke-linecap="round">
<path d="M411.500,343.500 L414.200,364.500"/>
<path d="M535.300,405.300 L534.300,427.800"/>
<path d="M696,481.500 L689.800,503.500"/>
</g>
<!-- TV shadow -->
<polygon points="778,198.300 775.600,215 774.500,262.700 742.800,363 737.500,373.600 723.500,381.400 719.200,378.200 729.400,362.400" fill="#1d1c23"/>
<line x1="724.500" y1="371.800" x2="757.900" y2="385.200" stroke="#0a0af0" stroke-width="1.300"/>
<!-- TV faces -->
<polygon points="470.200,123 486.200,113.400 778.200,198.800 766.900,211.900 719.200,378.300 474.800,274.700" fill="#302e3c"/>
<polygon points="766.900,211.900 778.200,198.800 729.400,362.500 719.200,378.300" fill="#1e1d24"/>
<g stroke="#d0d0d6" stroke-width="1" fill="none" stroke-linejoin="round">
<polygon points="470.200,123 766.900,211.900 719.200,378.300 474.800,274.700"/>
<polyline points="470.200,123 486.200,113.400 778.200,198.800 766.900,211.900"/>
<polyline points="778.200,198.800 729.400,362.500 719.200,378.300"/>
</g>
<!-- bottom-left blue shapes -->
<g stroke="#0a0af0" stroke-width="2.100" fill="none" stroke-linejoin="round">
<polyline points="48,603 35.400,576.600 45,574.800 58.800,603"/>
<polyline points="28.200,603 18,585.600 27,582 39.600,603"/>
<polyline points="3.600,603 0.600,595.200 9,591 16.800,603"/>
</g>
<!-- bottom-right blue structure -->
<polygon points="1000,510 989,546 984,568 1000,552" fill="#1d1c23"/>
<polygon points="998,560 992,580 985,602 995,602" fill="#1d1c23"/>
<g stroke="#0a0af0" stroke-width="1" fill="none" stroke-linecap="round">
<polyline points="992,480 953,532 905,594 899,602"/>
<polyline points="996,480 956,531 908,594 902,602"/>
<line x1="954" y1="531" x2="1000" y2="551"/>
<line x1="953" y1="532" x2="936" y2="602"/>
<line x1="955" y1="532" x2="940" y2="602"/>
<line x1="954" y1="534" x2="938" y2="602" stroke-width="1.600"/>
<line x1="1000" y1="552" x2="955" y2="602"/>
<line x1="1000" y1="556" x2="959" y2="602"/>
<line x1="999" y1="556" x2="995" y2="602"/>
<line x1="905" y1="594" x2="922" y2="602"/>
</g>
</svg>
</div>
















<!--TB--><svg id="tbar" class="abs" style="left:0;top:28px" width="1000" height="36" viewBox="0 28 1000 36">
<rect x="3" y="31.500" width="27.500" height="30" rx="2.500" fill="#c5c5c5"/>
<use href="#i-select" x="6.3" y="34.4" width="20" height="20"/>
<use href="#i-eraser" x="34.9" y="34.4" width="20" height="20"/>
<use href="#i-pencil" x="62.5" y="34.4" width="20" height="20"/>
<use href="#i-arc" x="95.0" y="34.4" width="20" height="20"/>
<use href="#i-rect" x="128.7" y="34.4" width="20" height="20"/>
<use href="#i-pushpull" x="162.5" y="34.4" width="20" height="20"/>
<use href="#i-offset" x="190.5" y="34.4" width="20" height="20"/>
<use href="#i-move" x="218.4" y="34.4" width="20" height="20"/>
<use href="#i-rotate" x="245.6" y="34.4" width="20" height="20"/>
<use href="#i-scale" x="274.2" y="34.4" width="20" height="20"/>
<use href="#i-tape" x="302.2" y="34.4" width="20" height="20"/>
<use href="#i-text" x="330.8" y="34.4" width="20" height="20"/>
<use href="#i-paint" x="355.6" y="34.4" width="20" height="20"/>
<use href="#i-orbit" x="384.9" y="34.4" width="20" height="20"/>
<use href="#i-pan" x="440.8" y="34.4" width="20" height="20"/>
<use href="#i-zoom" x="469.0" y="35.4" width="18" height="18"/>
<use href="#i-zoomext" x="497.2" y="35.6" width="17.5" height="17.5"/>
<use href="#i-wh" x="524.4" y="35.4" width="18" height="18"/>
<use href="#i-extwh" x="552.4" y="35.4" width="18" height="18"/>
<use href="#i-layout" x="581.0" y="36.6" width="15.5" height="15.5"/>
<use href="#i-ruby" x="608.7" y="36.4" width="16" height="16"/>
<path d="M83.9,43.300h5.200l-2.600,3.200z" fill="#222"/>
<path d="M117.0,43.300h5.200l-2.600,3.200z" fill="#222"/>
<path d="M150.4,43.300h5.200l-2.600,3.200z" fill="#222"/>
<rect x="633.800" y="36.800" width="105.600" height="15" rx="2.500" fill="#fafafa" stroke="#cfcfcf" stroke-width=".5"/>
<path d="M651.4,37V51.600" stroke="#d8d8d8" stroke-width=".6"/>
<path d="M669.0,37V51.600" stroke="#d8d8d8" stroke-width=".6"/>
<path d="M686.6,37V51.600" stroke="#d8d8d8" stroke-width=".6"/>
<path d="M704.2,37V51.600" stroke="#d8d8d8" stroke-width=".6"/>
<path d="M721.8,37V51.600" stroke="#d8d8d8" stroke-width=".6"/>
<use href="#v-iso" x="635.6" y="37.4" width="14" height="14"/>
<use href="#v-top" x="653.2" y="37.4" width="14" height="14"/>
<use href="#v-front" x="670.8" y="37.4" width="14" height="14"/>
<use href="#v-right" x="688.4" y="37.4" width="14" height="14"/>
<use href="#v-back" x="706.0" y="37.4" width="14" height="14"/>
<use href="#v-left" x="723.6" y="37.4" width="14" height="14"/>
<rect x="836.400" y="36.800" width="123.400" height="15" rx="2.500" fill="#fafafa" stroke="#cfcfcf" stroke-width=".5"/>
<path d="M854.0,37V51.600" stroke="#d8d8d8" stroke-width=".6"/>
<path d="M871.7,37V51.600" stroke="#d8d8d8" stroke-width=".6"/>
<path d="M889.3,37V51.600" stroke="#d8d8d8" stroke-width=".6"/>
<path d="M906.9,37V51.600" stroke="#d8d8d8" stroke-width=".6"/>
<path d="M924.5,37V51.600" stroke="#d8d8d8" stroke-width=".6"/>
<path d="M942.2,37V51.600" stroke="#d8d8d8" stroke-width=".6"/>
<use href="#s-xray" x="838.7" y="37.9" width="13" height="13"/>
<use href="#s-wire" x="856.3" y="37.9" width="13" height="13"/>
<use href="#s-wire" x="874.0" y="37.9" width="13" height="13"/>
<use href="#s-hidden" x="891.6" y="37.9" width="13" height="13"/>
<use href="#s-shaded" x="909.2" y="37.9" width="13" height="13"/>
<use href="#s-tex" x="926.9" y="37.9" width="13" height="13"/>
<use href="#s-mono" x="944.5" y="37.9" width="13" height="13"/>
<g transform="translate(980.800,44.600)"><circle r="8.600" fill="#ececec" stroke="#555" stroke-width=".9"/><circle cy="-2.600" r="2.700" fill="none" stroke="#555" stroke-width=".9"/><path d="M-5.200,6.500Q-5,1.500 0,1.500Q5,1.500 5.200,6.500" fill="none" stroke="#555" stroke-width=".9"/><circle cx="5" cy="6.300" r="3.600" fill="#3f9e3c" stroke="#d9e9d4" stroke-width=".6"/><path d="M3.300,6.400l1.200,1.300l2.300,-2.600" fill="none" stroke="#fff" stroke-width=".9"/></g>
</svg>
<div id="wheel" class="abs" style="left:414.600px;top:36.200px;width:16.400px;height:16.400px;border-radius:50%;background:conic-gradient(from 0deg,#f4e84a,#f6b04a,#f0606a,#ee50c8,#9a60f0,#50a0f4,#48dcdc,#60e070,#b8ec50,#f4e84a);box-shadow:0 .5px 1px rgba(0,0,0,.35)"></div>
<div id="pal"><i class="pc"></i>
<div class="cell sel" style="left:2.0px;top:10.3px"></div><div class="cell" style="left:24.8px;top:10.3px"></div><div class="cell" style="left:2.0px;top:33.3px"></div><div class="cell" style="left:24.8px;top:33.3px"></div>
<div class="cell" style="left:2.0px;top:62.9px"></div><div class="cell" style="left:24.8px;top:62.9px"></div><div class="cell" style="left:2.0px;top:85.9px"></div><div class="cell" style="left:24.8px;top:85.9px"></div><div class="cell" style="left:2.0px;top:108.9px"></div><div class="cell" style="left:24.8px;top:108.9px"></div><div class="cell" style="left:2.0px;top:131.9px"></div><div class="cell" style="left:24.8px;top:131.9px"></div><div class="cell" style="left:2.0px;top:154.9px"></div><div class="cell" style="left:24.8px;top:154.9px"></div>
<div class="cell" style="left:2.0px;top:184.3px"></div><div class="cell" style="left:24.8px;top:184.3px"></div><div class="cell" style="left:2.0px;top:207.3px"></div><div class="cell" style="left:24.8px;top:207.3px"></div><div class="cell" style="left:2.0px;top:230.3px"></div><div class="cell" style="left:24.8px;top:230.3px"></div>
<div class="cell" style="left:2.0px;top:259.1px"></div><div class="cell" style="left:24.8px;top:259.1px"></div><div class="cell" style="left:2.0px;top:282.1px"></div><div class="cell" style="left:24.8px;top:282.1px"></div><div class="cell" style="left:2.0px;top:305.1px"></div><div class="cell" style="left:24.8px;top:305.1px"></div>
<div class="cell" style="left:2.0px;top:334.1px"></div><div class="cell" style="left:24.8px;top:334.1px"></div><div class="cell" style="left:2.0px;top:357.1px"></div><div class="cell" style="left:24.8px;top:357.1px"></div><div class="cell" style="left:2.0px;top:380.1px"></div><div class="cell" style="left:24.8px;top:380.1px"></div>
<div class="cell" style="left:2.0px;top:409.1px"></div><div class="cell" style="left:24.8px;top:409.1px"></div><div class="cell" style="left:2.0px;top:432.1px"></div><div class="cell" style="left:24.8px;top:432.1px"></div>
<svg class="abs" style="left:0;top:.5px" width="50" height="457" viewBox="0 78 50 457">
<use href="#i-select" x="4.9" y="90.8" width="17" height="17"/>
<use href="#p-comp" x="27.7" y="90.8" width="17" height="17"/>
<use href="#i-paint" x="4.9" y="113.8" width="17" height="17"/>
<use href="#i-eraser" x="27.7" y="113.8" width="17" height="17"/>
<use href="#i-pencil" x="4.9" y="143.4" width="17" height="17"/>
<use href="#p-free" x="27.7" y="143.4" width="17" height="17"/>
<use href="#i-rect" x="4.9" y="166.4" width="17" height="17"/>
<use href="#p-rrect" x="27.7" y="166.4" width="17" height="17"/>
<use href="#p-circle" x="4.9" y="189.4" width="17" height="17"/>
<use href="#p-poly" x="27.7" y="189.4" width="17" height="17"/>
<use href="#p-arc2" x="4.9" y="212.4" width="17" height="17"/>
<use href="#p-arc1" x="27.7" y="212.4" width="17" height="17"/>
<use href="#p-arc3" x="4.9" y="235.4" width="17" height="17"/>
<use href="#p-pie" x="27.7" y="235.4" width="17" height="17"/>
<use href="#i-move" x="4.9" y="264.8" width="17" height="17"/>
<use href="#i-pushpull" x="27.7" y="264.8" width="17" height="17"/>
<use href="#i-rotate" x="4.9" y="287.8" width="17" height="17"/>
<use href="#p-follow" x="27.7" y="287.8" width="17" height="17"/>
<use href="#i-scale" x="4.9" y="310.8" width="17" height="17"/>
<use href="#i-offset" x="27.7" y="310.8" width="17" height="17"/>
<use href="#i-tape" x="4.9" y="339.6" width="17" height="17"/>
<use href="#p-dim" x="27.7" y="339.6" width="17" height="17"/>
<use href="#p-protr" x="4.9" y="362.6" width="17" height="17"/>
<use href="#i-text" x="27.7" y="362.6" width="17" height="17"/>
<use href="#p-axes" x="4.9" y="385.6" width="17" height="17"/>
<use href="#p-3dtext" x="27.7" y="385.6" width="17" height="17"/>
<use href="#i-orbit" x="4.9" y="414.6" width="17" height="17"/>
<use href="#i-pan" x="27.7" y="414.6" width="17" height="17"/>
<use href="#i-zoom" x="4.9" y="437.6" width="17" height="17"/>
<use href="#i-zoomwin" x="27.7" y="437.6" width="17" height="17"/>
<use href="#i-zoomext" x="4.9" y="460.6" width="17" height="17"/>
<use href="#i-prev" x="27.7" y="460.6" width="17" height="17"/>
<use href="#p-poscam" x="4.9" y="489.6" width="17" height="17"/>
<use href="#p-walk" x="27.7" y="489.6" width="17" height="17"/>
<use href="#p-look" x="4.9" y="512.6" width="17" height="17"/>
<use href="#p-section" x="27.7" y="512.6" width="17" height="17"/>
</svg>
</div>
<!--/TB-->
<div id="tray">
<div class="trow"><i></i><u>Styles</u></div>
<div class="trow"><i></i><u>Entity Info</u></div>
<div class="trow"><i></i><u>Components</u></div>
<div class="trow"><i></i><u>Shadow Settings</u></div>
<div class="trow"><i></i><u>Scenes</u></div>
<div class="trow"><i></i><u>Fog</u></div>
</div>
<div id="status"><svg class="abs" style="left:0;top:0" width="60" height="19" viewBox="0 602 60 19">
<circle cx="11.200" cy="613" r="5.300" fill="#d8d8d8" stroke="#222" stroke-width="1"/><path d="M8.700,610.200h5v3.600l-2.500,2.400l-2.500,-2.400z" fill="#555"/><circle cx="11.200" cy="611.500" r="1.300" fill="#e02030"/><path d="M9.700,615.500l1.500,-2.200l1.500,2.200z" fill="#e02030"/>
<circle cx="28" cy="613" r="5.300" fill="#f4f4f4" stroke="#222" stroke-width="1"/><circle cx="28" cy="610.400" r="1" fill="#111"/><path d="M28,612v3.800" stroke="#111" stroke-width="1.500"/>
<path d="M37.600,605.500v15" stroke="#c8c8c8" stroke-width=".6"/>
<circle cx="47.300" cy="613" r="5.900" fill="#1b428f" stroke="#0c0c14" stroke-width="1.100"/>
</svg><span class="abs" style="left:44.600px;top:0;font-size:9.500px;font-weight:bold;color:#0a0a14;line-height:19.500px">?</span><span class="abs" style="left:58px;top:0">Select objects. Shift to extend select. Drag mouse to select multiple.</span><span class="abs" style="left:797px;top:0">Measurements</span><div class="abs" style="left:862px;top:2px;width:133px;height:14px;background:#fff;border:1px solid #cfcfcf"></div></div>
<div id="under"><span class="abs" style="left:78px;top:-.4px;font-size:9.500px;line-height:11px;font-weight:bold;color:#333;white-space:nowrap;letter-spacing:.1px">Changes in the last Category at each view size of the Pack default. Category uses the background for additional tools</span></div>
<svg class="abs" style="left:100px;top:4px;z-index:50" width="16" height="18" viewBox="100 4 16 18"><path d="M104.600,6.800v9.600l2.200,-2l1.700,3.800l1.500,-.7l-1.700,-3.700h3z" fill="#0a0a0a" stroke="#fff" stroke-width=".7" stroke-linejoin="round"/></svg>
</body>
</html>
